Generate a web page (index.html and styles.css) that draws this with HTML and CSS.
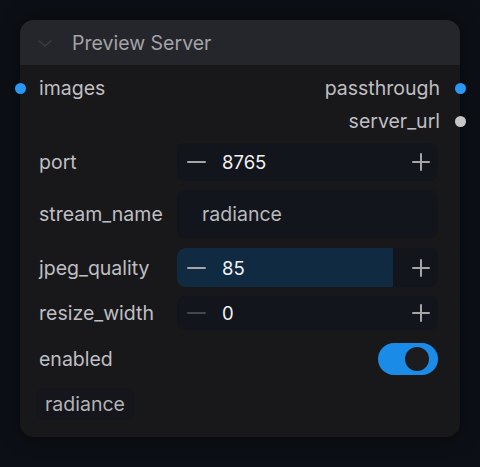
FILE: index.html
```html
<!DOCTYPE html>
<html>
<head>
<meta charset="utf-8">
<link rel="stylesheet" href="styles.css">
</head>
<body>
<div class="node">
  <div class="header">
    <svg class="chev" width="14" height="8" viewBox="0 0 14 8"><path d="M1 1 L7 6 L13 1" fill="none" stroke="#3a3c44" stroke-width="1.6" stroke-linecap="round" stroke-linejoin="round"/></svg>
    <span class="title">Preview Server</span>
  </div>
  <div class="content">
    <div class="slot r1">
      <span class="dot in blue"></span>
      <span class="slot-in">images</span>
      <span class="slot-out">passthrough</span>
      <span class="dot out blue"></span>
    </div>
    <div class="slot r2">
      <span class="slot-out">server_url</span>
      <span class="dot out grey"></span>
    </div>
    <div class="wrow r-port">
      <span class="label">port</span>
      <div class="widget num">
        <span class="minus"></span>
        <span class="val">8765</span>
        <span class="plus"></span>
      </div>
    </div>
    <div class="wrow r-stream">
      <span class="label">stream_name</span>
      <div class="widget text"><span class="tval">radiance</span></div>
    </div>
    <div class="wrow r-jpeg">
      <span class="label">jpeg_quality</span>
      <div class="widget num">
        <div class="fill" style="width: 82.8%"></div>
        <span class="minus"></span>
        <span class="val">85</span>
        <span class="plus"></span>
      </div>
    </div>
    <div class="wrow r-resize">
      <span class="label">resize_width</span>
      <div class="widget num">
        <span class="minus dim"></span>
        <span class="val">0</span>
        <span class="plus"></span>
      </div>
    </div>
    <div class="wrow r-enabled">
      <span class="label">enabled</span>
      <div class="toggle"><span class="knob"></span></div>
    </div>
    <div class="tagrow">
      <span class="tag">radiance</span>
    </div>
  </div>
</div>
</body>
</html>
```

FILE: styles.css
```css
html, body {
  margin: 0;
  padding: 0;
}
body {
  background: #0c0f15;
  width: 480px;
  height: 467px;
  overflow: hidden;
  font-family: Inter, "Noto Sans", sans-serif;
  font-size: 19.5px;
  padding-top: 20px;
  box-sizing: border-box;
}
.node {
  margin-left: 20px;
  width: 440px;
  height: 417px;
  border-radius: 14px;
  background: #18181b;
  box-shadow: 0 0 18px rgba(0,0,0,0.5);
  position: relative;
}
.header {
  height: 45px;
  background: #25262b;
  border-radius: 14px 14px 0 0;
  display: flex;
  align-items: center;
}
.chev {
  margin-left: 18px;
  margin-top: 2px;
}
.title {
  margin-left: 20px;
  color: #a3a3a6;
  font-size: 19.5px;
}
.content {
  padding: 8px 22px 0 19px;
  display: flex;
  flex-direction: column;
}
.slot {
  height: 30px;
  display: flex;
  align-items: center;
  position: relative;
  color: #bfbfc2;
}
.slot.r2 {
  margin-top: 3px;
}
.slot-in {
  flex: 1;
}
.slot-out {
  margin-left: auto;
  margin-right: -2px;
}
.dot {
  position: absolute;
  width: 11px;
  height: 11px;
  border-radius: 50%;
  top: 50%;
  margin-top: -5.5px;
}
.dot.in { left: -24.5px; }
.dot.out { right: -27.5px; }
.blue { background: #2a97f2; }
.grey { background: #c6c6c8; }
.wrow {
  display: flex;
  align-items: center;
  color: #bfbfc2;
}
.label {
  width: 138px;
  flex-shrink: 0;
}
.r-port { margin-top: 7px; height: 38px; }
.r-stream { margin-top: 9px; height: 48px; }
.r-jpeg { margin-top: 10px; height: 39px; }
.r-resize { margin-top: 9px; height: 34px; }
.r-enabled { margin-top: 12px; height: 33px; justify-content: space-between; }
.widget {
  flex: 1;
  height: 100%;
  background: #12151b;
  border-radius: 8px;
  position: relative;
  display: flex;
  align-items: center;
  overflow: hidden;
}
.fill {
  position: absolute;
  left: 0;
  top: 0;
  bottom: 0;
  background: #102a41;
  border-radius: 8px 0 0 8px;
}
.minus {
  position: relative;
  width: 19px;
  height: 2px;
  background: #a5a5a8;
  margin-left: 10px;
  border-radius: 1px;
}
.minus.dim {
  background: #45474c;
}
.val {
  position: relative;
  margin-left: 16px;
  color: #f2f2f2;
  font-size: 18.5px;
  flex: 1;
}
.plus {
  position: relative;
  width: 18px;
  height: 18px;
  margin-right: 8px;
}
.plus::before, .plus::after {
  content: "";
  position: absolute;
  background: #a5a5a8;
  border-radius: 1px;
}
.plus::before {
  left: 0; right: 0; top: 8px; height: 2px;
}
.plus::after {
  top: 0; bottom: 0; left: 8px; width: 2px;
}
.tval {
  margin-left: 25px;
  color: #b9b9bc;
}
.toggle {
  width: 60px;
  height: 32px;
  border-radius: 16px;
  background: #1a8be6;
  position: relative;
}
.knob {
  position: absolute;
  right: 9px;
  top: 4px;
  width: 24px;
  height: 24px;
  border-radius: 50%;
  background: #1c1c1e;
}
.tagrow {
  margin-top: 13px;
  display: flex;
}
.tag {
  margin-left: -3px;
  height: 32px;
  line-height: 32px;
  padding: 0 10px 0 9px;
  border-radius: 8px;
  background: #14161b;
  color: #b3b3b6;
}
```
